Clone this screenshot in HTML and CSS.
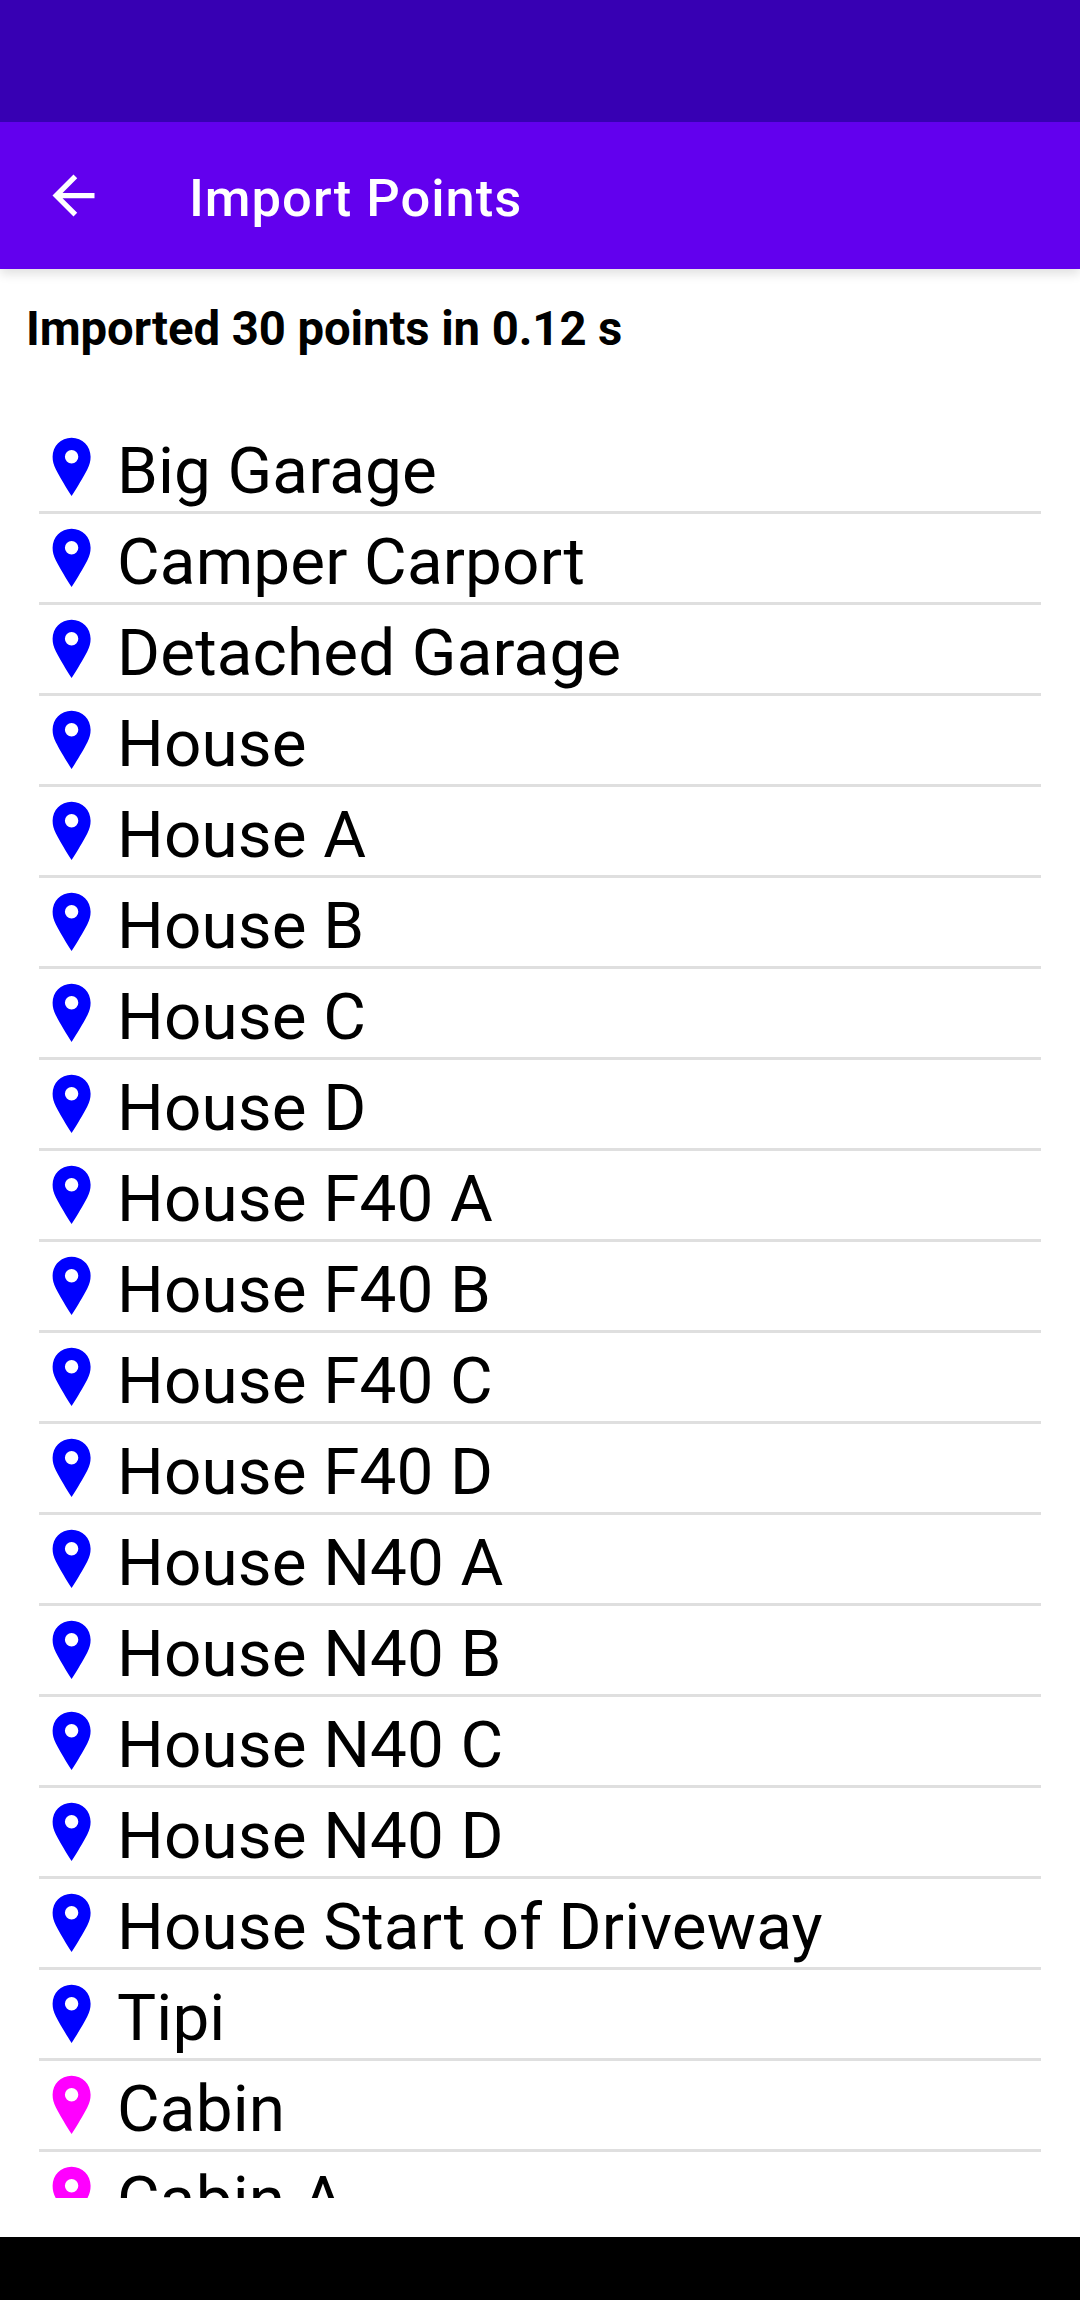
FILE: index.html
```html
<!DOCTYPE html>
<html lang="en">
<head>
<meta charset="utf-8">
<title>Import Points</title>
<link rel="stylesheet" href="styles.css">
</head>
<body>
<svg width="0" height="0" class="defs"><symbol id="pin" viewBox="-0.6 -0.7 40 60"><path fill-rule="evenodd" d="M19 0C8.2 0 0 8.5 0 19C0 23.5 1 27 3.2 31.5C7 39 14 50.5 19 58.4C24 50.5 31 39 34.8 31.5C37 27 38 23.5 38 19C38 8.5 29.8 0 19 0ZM19 12.4a6.7 6.7 0 1 1 0 13.4a6.7 6.7 0 1 1 0-13.4Z"/></symbol></svg>
<div class="screen">
<div class="status"></div>
<header class="bar"><svg class="back" viewBox="0 0 24 24"><path d="M20 11H7.83l5.59-5.59L12 4l-8 8 8 8 1.41-1.41L7.83 13H20v-2z"/></svg><h1>Import Points</h1></header>
<main class="content">
<p class="summary">Imported 30 points in 0.12 s</p>
<ul class="list">
<li><svg class="pin"><use href="#pin"/></svg><span>Big Garage</span></li>
<li><svg class="pin"><use href="#pin"/></svg><span>Camper Carport</span></li>
<li><svg class="pin"><use href="#pin"/></svg><span>Detached Garage</span></li>
<li><svg class="pin"><use href="#pin"/></svg><span>House</span></li>
<li><svg class="pin"><use href="#pin"/></svg><span>House A</span></li>
<li><svg class="pin"><use href="#pin"/></svg><span>House B</span></li>
<li><svg class="pin"><use href="#pin"/></svg><span>House C</span></li>
<li><svg class="pin"><use href="#pin"/></svg><span>House D</span></li>
<li><svg class="pin"><use href="#pin"/></svg><span>House F40 A</span></li>
<li><svg class="pin"><use href="#pin"/></svg><span>House F40 B</span></li>
<li><svg class="pin"><use href="#pin"/></svg><span>House F40 C</span></li>
<li><svg class="pin"><use href="#pin"/></svg><span>House F40 D</span></li>
<li><svg class="pin"><use href="#pin"/></svg><span>House N40 A</span></li>
<li><svg class="pin"><use href="#pin"/></svg><span>House N40 B</span></li>
<li><svg class="pin"><use href="#pin"/></svg><span>House N40 C</span></li>
<li><svg class="pin"><use href="#pin"/></svg><span>House N40 D</span></li>
<li><svg class="pin"><use href="#pin"/></svg><span>House Start of Driveway</span></li>
<li><svg class="pin"><use href="#pin"/></svg><span>Tipi</span></li>
<li><svg class="pin cabin"><use href="#pin"/></svg><span>Cabin</span></li>
<li><svg class="pin cabin"><use href="#pin"/></svg><span>Cabin A</span></li>
</ul>
</main>
<footer class="nav"></footer>
</div>
</body>
</html>
```

FILE: styles.css
```css
* { box-sizing: border-box; margin: 0; padding: 0; }
body { background: #fff; color: #000; font-family: Roboto, sans-serif; }
.defs { display: block; height: 0; }
.screen { display: flex; flex-direction: column; width: 1080px; height: 2300px; overflow: hidden; }
.status { height: 122px; background: #3700b3; }
.bar { display: flex; align-items: center; height: 147px; padding-left: 42px; background: #6200ee; color: #fff; box-shadow: 0 5px 10px rgba(0,0,0,.12); clip-path: inset(0 0 -20px 0); }
.back { width: 63px; height: 63px; fill: #fff; }
.bar h1 { margin: 5px 0 0 84px; font-size: 52.5px; font-weight: 500; line-height: 62px; letter-spacing: 1px; white-space: nowrap; }
.content { flex: 1; min-height: 0; display: flex; flex-direction: column; padding: 32px 39px 39px; }
.summary { margin-left: -13px; font-size: 47.25px; font-weight: 700; line-height: 56px; letter-spacing: -.07px; white-space: nowrap; }
.list { flex: 1; min-height: 0; margin-top: 66px; overflow: hidden; list-style: none; }
.list li { display: flex; align-items: flex-start; height: 91px; padding: 9px 0 0 13px; border-bottom: 3px solid #dfdfdf; font-size: 65.625px; line-height: 77px; letter-spacing: .14px; white-space: nowrap; }
.pin { flex: none; width: 40px; height: 60px; margin-top: 5px; fill: #00f; }
.cabin { fill: #f0f; }
.list span { margin-left: 25px; }
.nav { height: 63px; background: #000; }
```
